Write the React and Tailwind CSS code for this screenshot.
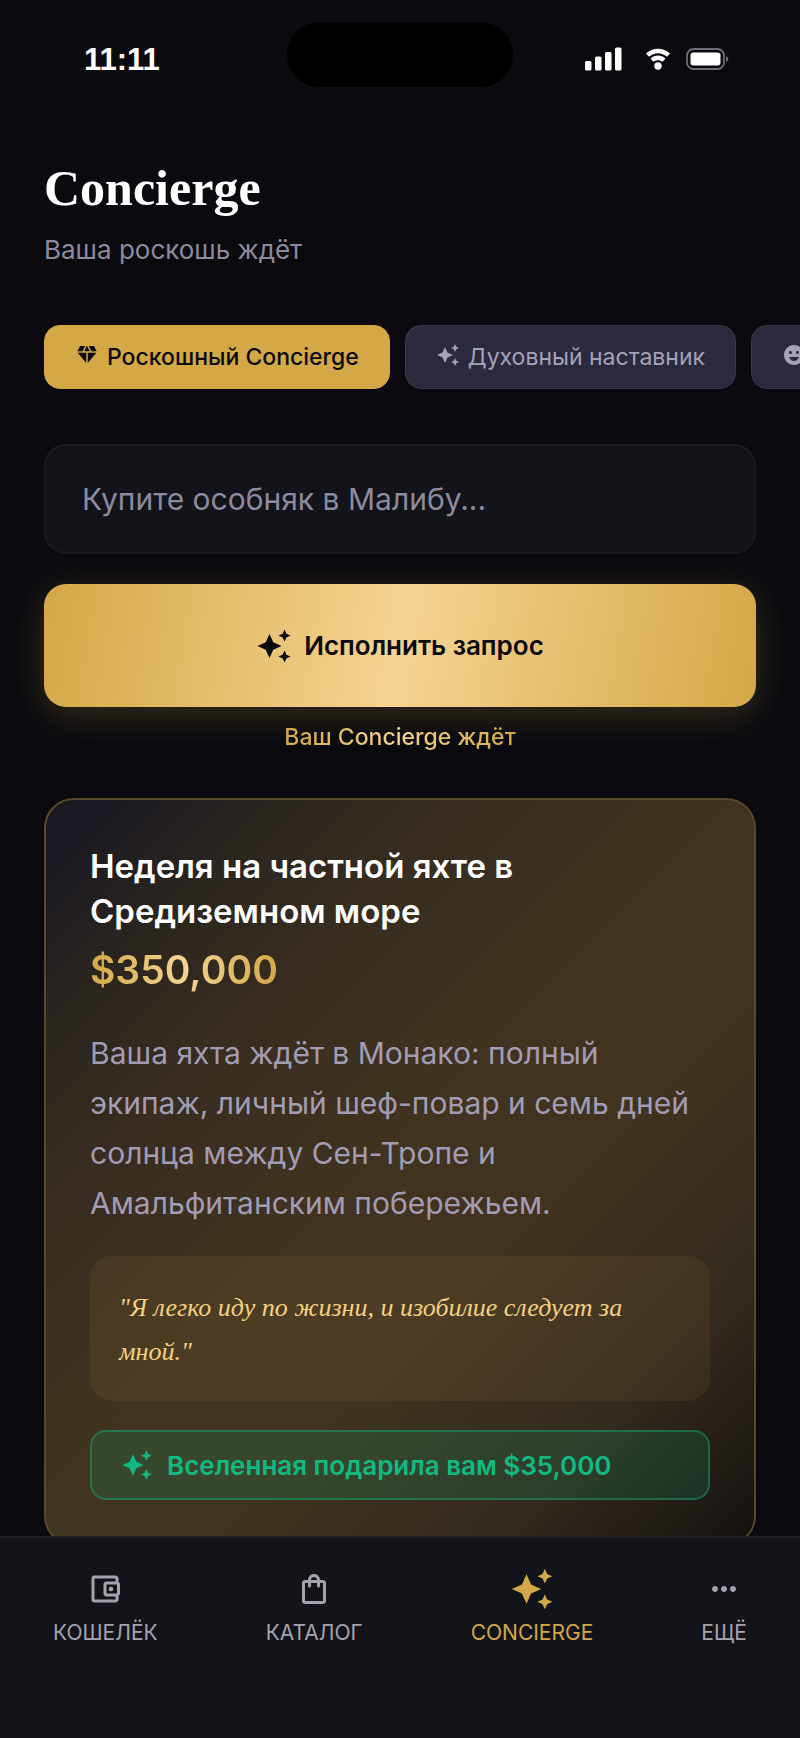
import { useState } from 'react';
import {
  MdAutoAwesome,
  MdDiamond,
  MdEmojiEmotions,
  MdMoreHoriz,
  MdOutlineAccountBalanceWallet,
  MdOutlineShoppingBag,
} from 'react-icons/md';

const modes = [
  { id: 'luxury', label: 'Роскошный Concierge', icon: MdDiamond },
  { id: 'spirit', label: 'Духовный наставник', icon: MdAutoAwesome },
  { id: 'fun', icon: MdEmojiEmotions },
];

const tabs = [
  { id: 'wallet', label: 'КОШЕЛЁК', icon: MdOutlineAccountBalanceWallet, size: 'size-9' },
  { id: 'catalog', label: 'КАТАЛОГ', icon: MdOutlineShoppingBag, size: 'size-9' },
  { id: 'concierge', label: 'CONCIERGE', icon: MdAutoAwesome, size: 'size-11' },
  { id: 'more', label: 'ЕЩЁ', icon: MdMoreHoriz, size: 'size-9' },
];

function StatusBar() {
  return (
    <div className="grid grid-cols-[1fr_226px_1fr] items-center pt-[22px]">
      <span className="pt-2.5 pl-[84px] font-['Liberation_Sans',sans-serif] text-[31px] leading-9 font-bold text-white">
        11:11
      </span>
      <div className="h-[65px] rounded-full bg-black" />
      <div className="flex items-center justify-end gap-6 pt-2 pr-[71px]">
        <svg width="37" height="24" viewBox="0 0 37 24" fill="white" aria-hidden="true">
          <rect x="0" y="14" width="6.5" height="9.5" rx="1.5" />
          <rect x="10" y="9.5" width="6.5" height="14" rx="1.5" />
          <rect x="20" y="5" width="6.5" height="18.5" rx="1.5" />
          <rect x="30" y="0.5" width="6.5" height="23" rx="1.5" />
        </svg>
        <div className="flex items-center gap-4">
          <svg width="24" height="22" viewBox="0 0 24 22" fill="white" aria-hidden="true">
            <path d="M0 5.5C6.5-1 17.5-1 24 5.5L21 8.7C15.5 4 8.5 4 3 8.7Z" />
            <path d="M4.5 10.5C8.5 6.5 15.5 6.5 19.5 10.5L16.5 13.8C14 11.6 10 11.6 7.5 13.8Z" />
            <circle cx="12" cy="18" r="3.7" />
          </svg>
          <svg width="43" height="22" viewBox="0 0 43 22" aria-hidden="true">
            <rect x="1" y="1" width="37" height="20" rx="6.5" fill="none" stroke="#6f6d76" strokeWidth="1.8" />
            <rect x="4.5" y="4.5" width="30" height="13" rx="3" fill="white" />
            <path d="M40 8c3 1 3 5 0 6z" fill="#6f6d76" />
          </svg>
        </div>
      </div>
    </div>
  );
}

export default function App() {
  const [mode, setMode] = useState('luxury');
  const [tab, setTab] = useState('concierge');
  const [request, setRequest] = useState('');

  return (
    <div className="flex h-screen flex-col overflow-hidden bg-[#0a0a0f] font-['Inter','Noto_Sans',sans-serif]">
      <StatusBar />

      <main className="min-h-0 flex-1 overflow-hidden px-11 pt-[71px]">
        <h1 className="font-['Liberation_Serif',serif] text-[50px] leading-[60px] font-bold text-white">
          Concierge
        </h1>
        <p className="mt-4 text-[26px] leading-8 text-[#8e8a9e]">Ваша роскошь ждёт</p>

        <div className="-mr-11 mt-[59px] flex gap-[15px] overflow-hidden">
          {modes.map(({ id, label, icon: Icon }) => (
            <button
              key={id}
              type="button"
              aria-label={label || id}
              onClick={() => setMode(id)}
              className={`flex h-16 shrink-0 items-center gap-2 rounded-2xl border px-[30px] text-[23px] ${
                mode === id
                  ? 'border-[#d4a847] bg-[#d4a847] font-medium text-[#0a0a0f]'
                  : 'border-[#3a394a] bg-[#2a2a3c] text-[#a5a1b8]'
              }`}
            >
              <Icon className="mb-1 size-6" aria-hidden="true" />
              {label}
            </button>
          ))}
        </div>

        <form onSubmit={(e) => e.preventDefault()} className="mt-[55px]">
          <input
            type="text"
            aria-label="Запрос"
            placeholder="Купите особняк в Малибу..."
            value={request}
            onChange={(e) => setRequest(e.target.value)}
            className="h-[110px] w-full rounded-[22px] border-2 border-[#1b1a20] bg-[#131419] px-9 text-[30px] text-white outline-none placeholder:text-[#8e8a9e]"
          />
          <button
            type="submit"
            className="mt-[30px] flex h-[123px] w-full items-center justify-center gap-3 rounded-[22px] bg-[linear-gradient(100deg,#d4a847,#f5d392_50%,#d4a847)] text-[26px] font-semibold text-[#0a0a0f] shadow-[0_8px_36px_rgba(212,168,71,0.22)]"
          >
            <MdAutoAwesome className="size-9" aria-hidden="true" />
            Исполнить запрос
          </button>
        </form>

        <p className="mt-4 text-center text-[23px] leading-7 font-medium">
          <span className="bg-[linear-gradient(90deg,#d4a847,#f5d392_50%,#d4a847)] bg-clip-text text-transparent">
            Ваш Concierge ждёт
          </span>
        </p>

        <article className="mt-[47px] rounded-[30px] border-2 border-[#5a482a] bg-[linear-gradient(135deg,#1b1922_4%,#2a251f_16%,#362c20_27%,#403420_48%,#403420_62%,#32291f_82%,#15120f)] p-[44px]">
          <h2 className="text-[33px] leading-[45px] font-semibold text-white">
            Неделя на частной яхте в Средиземном море
          </h2>
          <p className="mt-2.5 text-[39px] leading-[52px] font-semibold">
            <span className="bg-[linear-gradient(90deg,#d4a847,#f5d392_50%,#d4a847)] bg-clip-text text-transparent">
              $350,000
            </span>
          </p>
          <p className="mt-8 text-[30px] leading-[50px] text-[#a09cb4]">
            Ваша яхта ждёт в Монако: полный экипаж, личный шеф-повар и семь дней солнца между
            Сен-Тропе и Амальфитанским побережьем.
          </p>
          <blockquote className="mt-7 rounded-[22px] bg-[#d4a847]/8 px-[29px] pt-[30px] pb-[27px] font-['Liberation_Serif',serif] text-[26px] leading-[44px] text-[#f5d080] italic">
            "Я легко иду по жизни, и изобилие следует за мной."
          </blockquote>
          <div className="mt-[29px] flex h-[70px] items-center gap-3.5 rounded-2xl border-2 border-[#10b981]/40 bg-[#10b981]/15 px-[29px] text-[26px] font-semibold text-[#10b981]">
            <MdAutoAwesome className="size-8" aria-hidden="true" />
            Вселенная подарила вам $35,000
          </div>
        </article>
      </main>

      <nav className="flex h-[202px] shrink-0 items-start justify-between border-t-2 border-[#1f1e24] bg-[#131419] px-[53px] pt-[28px]">
        {tabs.map(({ id, label, icon: Icon, size }) => (
          <button
            key={id}
            type="button"
            onClick={() => setTab(id)}
            className={`flex flex-col items-center gap-[7px] text-[21px] leading-7 ${
              tab === id ? 'text-[#d4a847]' : 'text-[#a5a2ad]'
            }`}
          >
            <span className="flex h-[46px] items-center">
              <Icon className={size} aria-hidden="true" />
            </span>
            {label}
          </button>
        ))}
      </nav>
    </div>
  );
}
